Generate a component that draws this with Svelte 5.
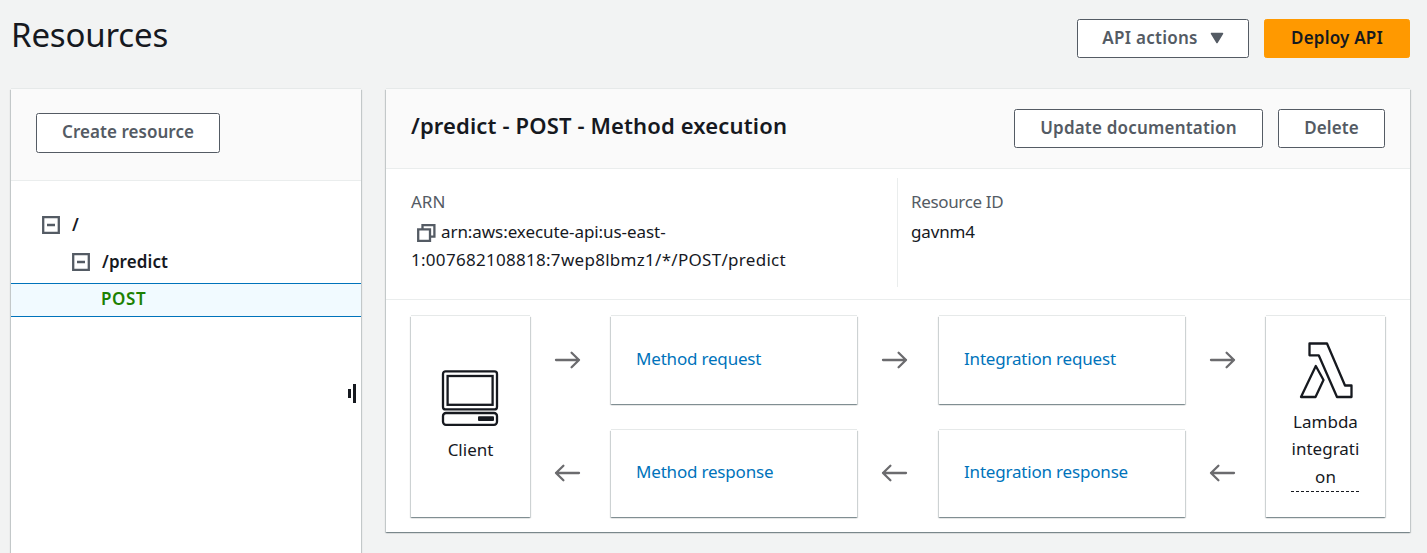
<script>
  const rows = [
    { dir: 'right', links: ['Method request', 'Integration request'] },
    { dir: 'left', links: ['Method response', 'Integration response'] }
  ];
</script>

{#snippet arrow(dir)}
  <svg class="arrow" class:flip={dir === 'left'} width="27" height="20" viewBox="0 0 27 20" fill="none" stroke="#6b6b6e" stroke-width="2.3" stroke-linecap="round" stroke-linejoin="round">
    <path d="M2 10H25M17.6 2.8L25 10L17.6 17.2" />
  </svg>
{/snippet}

{#snippet toggle()}
  <svg class="toggle" width="18" height="18" viewBox="0 0 18 18" fill="none" stroke="#545b64" stroke-width="2.3">
    <path d="M1.2 1.2H16.8V16.8H1.2ZM5 9H13" />
  </svg>
{/snippet}

<div class="page">
  <header class="top">
    <h1>Resources</h1>
    <div class="actions">
      <button class="btn api"><span>API actions</span>
        <svg width="14" height="12" viewBox="0 0 14 12"><path d="M1.5 1.5H12.5L7 10.5Z" fill="#545b64" stroke="#545b64" stroke-width="1.5" stroke-linejoin="round" /></svg>
      </button>
      <button class="btn primary">Deploy API</button>
    </div>
  </header>

  <main>
    <aside class="panel side">
      <div class="side-head"><button class="btn create">Create resource</button></div>
      <div class="tree">
        <div class="node root">{@render toggle()}<span>/</span></div>
        <div class="node child">{@render toggle()}<span>/predict</span></div>
        <div class="node method"><span>POST</span></div>
      </div>
      <div class="handle"><i></i><b></b></div>
    </aside>

    <section class="panel detail">
      <div class="detail-head">
        <h2>/predict - POST - Method execution</h2>
        <div class="actions">
          <button class="btn update">Update documentation</button>
          <button class="btn delete">Delete</button>
        </div>
      </div>
      <div class="info">
        <div class="arn">
          <div class="label">ARN</div>
          <div class="value">
            <svg width="19" height="18" viewBox="0 0 19 18" fill="none" stroke="#545b64" stroke-width="2.3"><path d="M1.2 5.3H13V16.8H1.2ZM5.5 5V1.2H17.4V12.6H13.5" /></svg><span class="arn-start">arn:aws:execute-api:us-east-</span><br /><span class="arn-end">1:007682108818:7wep8lbmz1/*/POST/predict</span>
          </div>
        </div>
        <div class="rid">
          <div class="label">Resource ID</div>
          <div class="value">gavnm4</div>
        </div>
      </div>

      <div class="flow">
        <div class="card client">
          <svg width="58" height="57" viewBox="0 0 58 57" fill="none" stroke="#16191f" stroke-width="2.3">
            <rect x="2" y="1.4" width="54" height="38" rx="2.5" />
            <rect x="6.6" y="6" width="45" height="28.8" />
            <rect x="2" y="43" width="54" height="11.8" rx="3" />
            <rect x="37" y="46.3" width="16" height="4.8" rx="1" fill="#16191f" stroke="none" />
          </svg>
          <span>Client</span>
        </div>
        <div class="middle">
          {#each rows as row}
            <div class="flow-row">
              <div class="gap g1">{@render arrow(row.dir)}</div>
              <div class="card step"><a href="#top">{row.links[0]}</a></div>
              <div class="gap g2">{@render arrow(row.dir)}</div>
              <div class="card step"><a href="#top">{row.links[1]}</a></div>
              <div class="gap g3">{@render arrow(row.dir)}</div>
            </div>
          {/each}
        </div>
        <div class="card lambda">
          <svg width="54" height="57" viewBox="0 0 54 57" fill="none" stroke="#16191f" stroke-width="2.3" stroke-linejoin="round">
            <path d="M10.5 1.5H28L46 43.5H52.5V55H38L19.7 13.3H10.5Z" />
            <path d="M16.8 24L24.5 38L16.5 55H2Z" />
          </svg>
          <div class="lam-text">Lambda<br />integrati<br />on</div>
        </div>
      </div>
    </section>
  </main>
</div>

<style>
  :global(body) { margin: 0; overflow: hidden; background: #f2f3f3; }
  .page { box-sizing: border-box; height: 553px; overflow: hidden; padding: 0 17px 0 11px; background: #f2f3f3; color: #16191f; font: 17px/28px "Noto Sans", "Open Sans", sans-serif; white-space: nowrap; }
  .top { display: flex; justify-content: space-between; height: 89px; }
  h1 { margin: 14px 0 0; font-size: 33px; line-height: 42px; font-weight: 400; letter-spacing: -.15px; }
  .actions { display: flex; gap: 15px; }
  .top .actions { padding-top: 19px; }
  .btn { box-sizing: border-box; display: flex; align-items: center; justify-content: center; height: 39px; padding: 0 0 2px; background: #fff; border: 1px solid #545b64; border-radius: 2.5px; color: #545b64; font: 600 17px/28px "Noto Sans", "Open Sans", sans-serif; letter-spacing: .1px; }
  .api { width: 172px; gap: 12px; letter-spacing: .27px; }
  .primary { width: 146px; background: #ff9900; border-color: #ff9900; color: #16191f; letter-spacing: .2px; }
  .create { width: 184px; height: 40px; letter-spacing: .05px; }
  .update { width: 249px; letter-spacing: .2px; }
  .delete { width: 107px; }
  main { display: flex; gap: 25px; align-items: flex-start; }
  .panel, .card { background: #fff; box-shadow: 0 -1px 0 #e6e9e9, 0 1px 1px rgba(0, 28, 36, .3), 1px 1px 1px rgba(0, 28, 36, .15), -1px 1px 1px rgba(0, 28, 36, .15); }
  .side { position: relative; width: 350px; height: 480px; }
  .side-head { box-sizing: border-box; height: 92px; padding: 24px 25px; background: #fafafa; border-bottom: 1px solid #eaeded; }
  .tree { padding-top: 28px; }
  .node { display: flex; align-items: center; box-sizing: border-box; font-weight: 600; letter-spacing: .1px; }
  .toggle { margin-right: 12px; }
  .root { height: 32px; padding-left: 31px; }
  .child { height: 42px; padding-left: 61px; }
  .method { height: 34px; padding: 0 0 3px 90px; background: #f1faff; border: solid #0073bb; border-width: 1px 0; color: #1d8102; letter-spacing: .6px; }
  .handle { position: absolute; right: 5px; top: 295px; display: flex; align-items: center; gap: 2px; }
  .handle i { width: 3px; height: 9px; background: #16191f; }
  .handle b { width: 3px; height: 19px; background: #16191f; }
  .detail { width: 1024px; height: 443px; }
  .detail-head { box-sizing: border-box; display: flex; justify-content: space-between; height: 80px; padding: 20px 25px; background: #fafafa; border-bottom: 1px solid #eaeded; }
  h2 { margin: -1px 0 0; font-size: 22px; line-height: 34px; font-weight: 600; letter-spacing: .14px; }
  .info { box-sizing: border-box; display: flex; height: 131px; padding: 9px 25px 12px; border-bottom: 1px solid #eaeded; }
  .arn { box-sizing: border-box; width: 487px; padding-top: 10px; border-right: 1px solid #eaeded; }
  .rid { padding: 10px 0 0 13px; }
  .label { color: #545b64; height: 30px; }
  .rid .label { letter-spacing: -.35px; }
  .rid .value { letter-spacing: -.15px; }
  .arn-start { letter-spacing: -.07px; }
  .arn-end { letter-spacing: .29px; }
  .value svg { margin: 0 5px 0 6px; vertical-align: -4px; }
  .flow { display: flex; height: 201px; padding: 16px 25px 0; }
  .card { box-sizing: border-box; }
  .client, .lambda { width: 119px; display: flex; flex-direction: column; align-items: center; }
  .client { padding: 54px 1px 0 0; }
  .client span { margin: 9px 0 0 1px; }
  .lambda { padding-top: 26px; }
  .lam-text { width: 69px; height: 83px; line-height: 27.5px; margin-top: 8.6px; padding-bottom: 1px; text-align: center; background: repeating-linear-gradient(90deg, #16191f 0 3px, transparent 3px 5px) bottom / 100% 1px no-repeat; }
  .middle { display: flex; flex-direction: column; gap: 26px; }
  .flow-row { display: flex; height: 88px; }
  .flow-row + .flow-row { height: 87px; }
  .gap { display: flex; justify-content: center; align-items: center; box-sizing: border-box; padding-bottom: 1px; }
  .g1 { width: 81px; padding-right: 6px; }
  .g2 { width: 82px; padding-right: 8px; }
  .g3 { width: 81px; padding-right: 6px; }
  .flip { transform: scaleX(-1); }
  .step { width: 246px; padding: 29px 25px 0; letter-spacing: -.19px; }
  .flow-row + .flow-row .step { padding-top: 28px; }
  a { color: #0073bb; text-decoration: none; }
</style>
